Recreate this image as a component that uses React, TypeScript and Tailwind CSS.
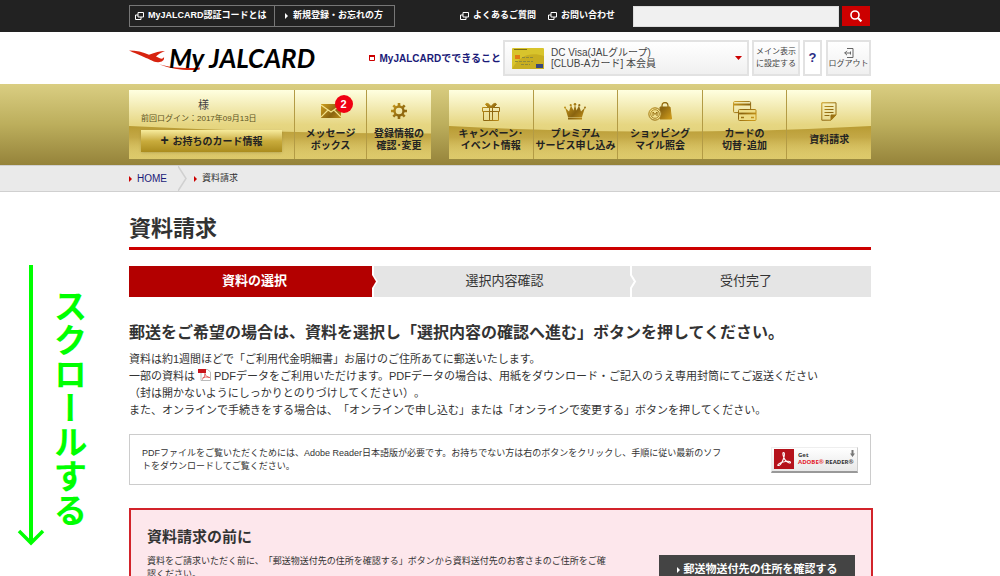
import React from 'react';

const Win = () => (
  <svg viewBox="0 0 9 8" className="w-[9px] h-2 shrink-0" fill="none" stroke="currentColor">
    <path d="M3 .5h5.500v4.500H3z M3 3H.5v4.500h5.500V5" />
  </svg>
);

const Tri = ({ className = '' }: { className?: string }) => (
  <svg viewBox="0 0 3 6" className={`w-[3px] h-[6px] shrink-0 ${className}`} fill="currentColor">
    <path d="M0 0l3 3-3 3z" />
  </svg>
);

const GoldDefs = () => (
  <svg className="absolute size-0" aria-hidden="true">
    <defs>
      <linearGradient id="gold" gradientUnits="userSpaceOnUse" x1="0" y1="0" x2="20" y2="18">
        <stop offset="0" stopColor="#cf9f1c" />
        <stop offset=".55" stopColor="#8a6410" />
        <stop offset="1" stopColor="#c8961a" />
      </linearGradient>
      <linearGradient id="shade" x1="0" y1="0" x2="0" y2="1">
        <stop offset="0" stopColor="#a98718" stopOpacity=".75" />
        <stop offset=".35" stopColor="#b3922a" stopOpacity=".65" />
        <stop offset="1" stopColor="#d9c25c" stopOpacity=".1" />
      </linearGradient>
    </defs>
  </svg>
);

const MailIcon = () => (
  <svg viewBox="0 0 20 14" className="w-5 h-[14px]">
    <path d="M0 0h20v14H0z" fill="url(#gold)" />
    <path d="M0 1l10 7 10-7M0 13l7-7M20 13l-7-7" stroke="#f3e28a" strokeWidth="1.200" fill="none" />
  </svg>
);

const GearIcon = () => (
  <svg viewBox="0 0 16 16" className="size-4" fill="none" stroke="url(#gold)">
    <circle cx="8" cy="8" r="4.500" strokeWidth="2.400" />
    <path d="M8 0v3M8 13v3M0 8h3M13 8h3M2.300 2.300l2 2M11.700 11.700l2 2M2.300 13.700l2-2M11.700 4.300l2-2" strokeWidth="2.600" />
  </svg>
);

const GiftIcon = () => (
  <svg viewBox="0 0 18 19" className="w-[18px] h-[19px]" fill="none" stroke="url(#gold)">
    <path d="M.5 5.500h17v4H.5zM1.500 9.500h15v9h-15z" />
    <path d="M7.500 5v13.500M10.500 5v13.500" />
    <path d="M9 5C7 1 4 .5 3.500 2.500L6 5zM9 5c2-4 5-4.500 5.500-2.500L12 5z" fill="url(#gold)" />
  </svg>
);

const CrownIcon = () => (
  <svg viewBox="0 0 22 17" className="w-[22px] h-[17px]" fill="url(#gold)">
    <path d="M1 4.500l4 4 2-6 2.500 5L11 1.500l1.500 6 2.500-5 2 6 4-4-3 9.500H4z" />
    <circle cx="1" cy="4.500" r="1" />
    <circle cx="6.700" cy="2.200" r="1.100" />
    <circle cx="11" cy="1.300" r="1.300" />
    <circle cx="15.300" cy="2.200" r="1.100" />
    <circle cx="21" cy="4.500" r="1" />
    <path d="M4 14.500h14v2H4z" />
  </svg>
);

const BagIcon = () => (
  <svg viewBox="0 0 24 19" className="w-6 h-[19px]" fill="none" stroke="url(#gold)">
    <path d="M12 5h10l1.500 12H12z" fill="url(#gold)" />
    <path d="M14 7V3.500a3 3 0 016 0V7" strokeWidth="1.300" />
    <circle cx="7" cy="12" r="6.200" fill="#f0df8c" />
    <circle cx="7" cy="12" r="4.300" strokeWidth=".8" />
    <path d="M5 14v-4l2 2.500L9 10v4" />
  </svg>
);

const CardsIcon = () => (
  <svg viewBox="0 0 24 20" className="w-6 h-5" fill="none" stroke="url(#gold)">
    <rect x=".6" y=".6" width="17" height="11" rx="1" />
    <path d="M1 3.500h16.500" strokeWidth="2" />
    <rect x="5.500" y="8.500" width="17.500" height="11" rx="1" fill="#eddb84" />
    <path d="M6 12.500h17" strokeWidth="1.800" />
    <path d="M18 16.500h3M8 16.500h3" strokeWidth="1.400" />
  </svg>
);

const DocIcon = () => (
  <svg viewBox="0 0 16 19" className="w-4 h-[19px]" fill="none" stroke="url(#gold)">
    <path d="M.8.8h14.200V13l-5 5.200H.8z" />
    <path d="M3.500 4.500h9M3.500 7.500h9M3.500 10.500h9M3.500 13.500h5" />
    <path d="M10 18v-5h5z" fill="url(#gold)" />
  </svg>
);

const leftNav = [
  { icon: MailIcon, lines: ['メッセージ', 'ボックス'], badge: 2, width: 'w-[71px]' },
  { icon: GearIcon, lines: ['登録情報の', '確認･変更'], badge: 0, width: 'w-[65px]' },
];

const rightNav = [
  { icon: GiftIcon, lines: ['キャンペーン･', 'イベント情報'] },
  { icon: CrownIcon, lines: ['プレミアム', 'サービス申し込み'] },
  { icon: BagIcon, lines: ['ショッピング', 'マイル照会'] },
  { icon: CardsIcon, lines: ['カードの', '切替･追加'] },
  { icon: DocIcon, lines: ['資料請求'] },
];

const panel = 'relative flex h-[69px] bg-linear-to-b from-[#ffffe0] via-[#e6d682] to-[#ddca6c]';
const cell = 'relative flex flex-col items-center border-l border-[#b39b45] first-of-type:border-l-0';
const label = 'mt-[7px] flex h-6 flex-col justify-center whitespace-nowrap text-center text-[10px] leading-3 font-bold text-[#222]';
const headBtn = 'border-2 border-[#e2e2e2] bg-linear-to-b from-white to-[#f0f0f0] text-[8px] text-[#444]';

const TopBar = () => (
  <div className="bg-[#222] text-white">
    <div className="mx-auto flex h-8 max-w-[742px] items-center text-[9px] font-bold">
      <div className="flex h-[22px] border border-[#777]">
        <a href="#" className="flex w-[145px] items-center gap-1 border-r border-[#777] pl-[5px]"><Win />MyJALCARD認証コードとは</a>
        <a href="#" className="flex w-[119px] items-center gap-[5px] pl-[10px]"><Tri />新規登録・お忘れの方</a>
      </div>
      <div className="ml-auto flex gap-3">
        <a href="#" className="flex items-center gap-1"><Win />よくあるご質問</a>
        <a href="#" className="flex items-center gap-1"><Win />お問い合わせ</a>
      </div>
      <form className="ml-[18px] flex items-center gap-[3px] pr-px" onSubmit={(e) => e.preventDefault()}>
        <input type="search" aria-label="サイト内検索" className="h-[21px] w-[206px] border border-[#ddd] bg-[#f0f0f0] px-1 text-[10px] text-[#222]" />
        <button type="submit" aria-label="検索" className="flex h-5 w-7 items-center justify-center bg-[#cc0000]">
          <svg viewBox="0 0 12 12" className="size-3" fill="none" stroke="#fff" strokeWidth="1.600">
            <circle cx="5" cy="5" r="4" />
            <path d="M7.800 7.800l3.600 3.600" strokeWidth="2.200" />
          </svg>
        </button>
      </form>
    </div>
  </div>
);

const Header = () => (
  <header className="mx-auto flex h-[52px] max-w-[742px] items-center">
    <a href="#" className="flex items-center whitespace-nowrap font-['Lato',sans-serif] text-[26px] leading-6 font-bold text-black italic">
      <svg viewBox="0 0 72 24" className="-mr-8 h-6 w-[72px] shrink-0" fill="#d7230f">
        <path d="M0 4.500c7 0 14 1.500 20 4.300C26 6.500 31 5 36 5c-4 1.500-7 3.500-9 5.500 3 1.500 5 2.500 6.500 2 .8-.3 1.300-1 1.500-1.500.5 2-.8 4.800-4.500 5C25 17 22 13.500 17 12 12 9.500 4 6.500 0 4.500z" />
        <path d="M30 18c10 3.500 27 5 41 3.500l-.5 2.300C54 25 40 22.500 30 18z" />
      </svg>
      My JALCARD
    </a>
    <div className="ml-auto flex h-[36px] shrink-0">
      <a href="#" className="mr-[2px] flex items-center gap-[5px] text-[10px] font-bold text-[#1a1a78]">
        <svg viewBox="0 0 6 6" className="size-[6px]"><path d="M.5.5h5v5h-5z" fill="#fff" stroke="#cc0000" /><path d="M0 0h6v2H0z" fill="#cc0000" /></svg>
        MyJALCARDでできること
      </a>
      <label className={`relative flex w-[246px] items-center ${headBtn}`}>
        <svg viewBox="0 0 32 21" className="ml-[7px] h-[21px] w-8" aria-hidden="true">
          <rect width="32" height="21" rx="1" fill="#d8c42c" />
          <path d="M0 21C8 6 20 4 32 8v13z" fill="#c8ae20" />
          <path d="M2 1.500h13" stroke="#766713" strokeWidth=".9" />
          <rect x="3" y="7" width="5" height="4" fill="#e07a14" />
          <path d="M10 9.500h12M3 13.500h18M9 16.500h9" stroke="#8f8a3a" strokeDasharray="3 1" />
          <rect x="24" y="16" width="7" height="4" fill="#38467a" />
        </svg>
        <span className="ml-[7px] text-[10px] leading-[11px]">DC Visa(JALグループ)<br />[CLUB-Aカード] 本会員</span>
        <svg viewBox="0 0 7 4" className="mr-[5px] ml-auto h-1 w-[7px]"><path d="M0 0h7L3.500 4z" fill="#cc0000" /></svg>
        <select aria-label="カード選択" className="absolute inset-0 w-full cursor-pointer opacity-0">
          <option>DC Visa(JALグループ) [CLUB-Aカード] 本会員</option>
        </select>
      </label>
      <button className={`ml-[3px] w-12 leading-3 ${headBtn}`}>メイン表示<br />に設定する</button>
      <button className="ml-[3px] w-[19px] border-2 border-[#e2e2e2] text-[13px] font-bold text-[#2c2c86]">?</button>
      <button className={`ml-1 flex w-[45px] flex-col items-center justify-center leading-[10px] ${headBtn}`}>
        <svg viewBox="0 0 10 10" className="mb-px size-[10px]" fill="none" stroke="#666"><path d="M3 .5h6v9H3M.5 5h6M3 2.800L.8 5 3 7.200M6.500 3.500v3" /></svg>
        <span className="whitespace-nowrap">ログアウト</span>
      </button>
    </div>
  </header>
);

const GoldNav = () => (
  <nav className="bg-linear-to-b from-[#dace82] via-[#bcae5c] to-[#95833a]">
    <GoldDefs />
    <div className="mx-auto flex h-[81px] max-w-[742px] justify-between pt-[6px]">
      <div className={panel}>
        <svg viewBox="0 0 302 40" preserveAspectRatio="none" className="absolute bottom-0 h-[33px] w-full"><path d="M0 0Q150 9 302 9V40H0z" fill="url(#shade)" /></svg>
        <div className="relative flex w-[166px] flex-col border-r border-[#b39b45] pr-3 pl-3">
          <p className="mt-2 pr-4 text-center text-[11px] leading-[14px] text-[#444]">様</p>
          <p className="text-[8px] leading-[14px] text-[#5c5222]">前回ログイン：2017年09月13日</p>
          <button className="mt-1 h-[22px] w-[141px] bg-linear-to-b from-[#f7ec9c] from-0% via-[#c9ac3c] via-50% to-[#ab8c1d] text-[10px] font-bold text-[#222] shadow-sm"><span className="mr-1 text-sm leading-none">+</span>お持ちのカード情報</button>
        </div>
        {leftNav.map((item) => (
          <a href="#" key={item.lines[0]} className={`${cell} ${item.width}`}>
            <span className="relative mt-[11px] flex h-5 items-center">
              <item.icon />
              {item.badge > 0 && (
                <span className="absolute -top-[6px] left-[14px] flex size-[18px] items-center justify-center rounded-full bg-[#f00012] text-[11px] font-bold text-white">{item.badge}</span>
              )}
            </span>
            <span className={label}>{item.lines.map((l) => <span key={l}>{l}</span>)}</span>
          </a>
        ))}
      </div>
      <div className={`w-[422px] ${panel}`}>
        <svg viewBox="0 0 422 40" preserveAspectRatio="none" className="absolute bottom-0 h-[33px] w-full"><path d="M0 0Q211 14 422 0V40H0z" fill="url(#shade)" /></svg>
        {rightNav.map((item) => (
          <a href="#" key={item.lines[0]} className={`flex-1 ${cell}`}>
            <span className="mt-[11px] flex h-5 items-center"><item.icon /></span>
            <span className={label}>{item.lines.map((l) => <span key={l}>{l}</span>)}</span>
          </a>
        ))}
      </div>
    </div>
  </nav>
);

const Breadcrumb = () => (
  <div className="border-y border-[#d0d0d0] bg-[#eaeaea]">
    <div className="mx-auto flex h-[25px] max-w-[742px] items-center text-[#333]">
      <a href="#" className="flex items-center gap-[5px] text-[10px] text-[#1a1a78]"><Tri className="text-[#cc0000]" />HOME</a>
      <svg viewBox="0 0 9 25" className="mr-[7px] ml-[11px] h-[25px] w-[9px]" fill="none" stroke="#d0d0d0" strokeWidth="1.500"><path d="M0 0l8 12.500L0 25" /></svg>
      <span className="flex items-center gap-[5px] text-[9px]"><Tri className="text-[#cc0000]" />資料請求</span>
    </div>
  </div>
);

const Steps = () => (
  <ol className="mt-4 flex h-[31px] bg-[#e5e5e5] text-center text-[13px] leading-[30px] text-[#333]">
    <li className="relative w-[243px] bg-[#b30000] pl-2 font-bold text-white">
      資料の選択
      <svg viewBox="0 0 8 31" className="absolute top-0 left-full h-[31px] w-2"><path d="M0 0h2v9.500l4 6-4 6V31H0z" fill="#fff" /><path d="M0 9l4 6.500L0 22z" fill="#b30000" /></svg>
    </li>
    <li className="relative w-[258px] pl-[7px]">
      選択内容確認
      <svg viewBox="0 0 8 31" className="absolute top-0 left-full h-[31px] w-2" fill="none" stroke="#fff" strokeWidth="2"><path d="M1 0v9l4 6.500L1 22v9" /></svg>
    </li>
    <li className="flex-1 pr-[9px]">受付完了</li>
  </ol>
);

const PdfMark = () => (
  <svg viewBox="0 0 13 12" className="mr-[3px] ml-[3px] inline h-3 w-[13px] align-[-1px]">
    <path d="M3 .5h6.500L12.500 3v8.500H3z" fill="#fff" stroke="#bbb" />
    <path d="M0 0h8v4H0z" fill="#c8141b" />
    <path d="M7 4c0 3-1 5-3 6.500M7 5c1 2 2.500 3.500 5 3.500M4.500 9c2-1 4-1.500 7-.5" fill="none" stroke="#e05050" strokeWidth=".9" />
  </svg>
);

const ReaderBadge = () => (
  <a href="#" className="flex h-[26px] w-[87px] shrink-0 items-center border border-t-[#eee] border-r-[#ccc] border-b-2 border-b-[#999] border-l-[#eee] bg-linear-to-b from-white to-[#e8e8e8] pl-[2px]">
    <svg viewBox="0 0 20 20" className="size-5 shrink-0">
      <path d="M0 0h20v20H0z" fill="#b5121b" />
      <path d="M9.500 3.500c1.500 0 1 4-.5 7.500-1.500 3.300-3.500 6-5 5.500-1-.8 2-3 6-3.800 3.500-.8 6.500-.5 6.500.7s-3 .5-5-2c-2-2.300-3.500-7.900-2-7.900z" fill="none" stroke="#fff" strokeWidth="1.100" />
    </svg>
    <span className="ml-1 whitespace-nowrap font-['Open_Sans',sans-serif] text-[6px] leading-[7px] font-bold text-[#333]">
      Get<br /><span className="text-[#e3202a]">ADOBE®</span> READER®
    </span>
    <svg viewBox="0 0 5 7" className="-ml-1 mb-3 h-[7px] w-[5px] shrink-0" fill="#777"><path d="M1.500 0h2v3.500H5L2.500 7 0 3.500h1.500z" /></svg>
  </a>
);

const ScrollNote = () => (
  <div className="absolute top-[265px] left-[17px] flex gap-[6px] text-[#00ff00]">
    <svg viewBox="0 0 28 281" className="h-[281px] w-7" fill="none" stroke="currentColor" strokeWidth="4">
      <path d="M14 0v278" />
      <path d="M2 266l12 12 12-12" strokeWidth="3.500" />
    </svg>
    <span className="pt-6 text-[34px] leading-[34px] font-bold [writing-mode:vertical-rl]">スクロールする</span>
  </div>
);

export default function App() {
  return (
    <div lang="ja" className="relative h-screen overflow-hidden bg-white font-['Liberation_Sans','Noto_Sans_CJK_JP',sans-serif] text-[#333] [text-spacing-trim:space-all]">
      <TopBar />
      <Header />
      <GoldNav />
      <Breadcrumb />
      <main className="mx-auto max-w-[742px]">
        <h1 className="mt-[21px] border-b-3 border-[#cc0000] pb-[2px] text-[22px] leading-8 font-bold">資料請求</h1>
        <Steps />
        <h2 className="mt-[25px] text-base leading-[22px] font-bold whitespace-nowrap">郵送をご希望の場合は、資料を選択し「選択内容の確認へ進む」ボタンを押してください。</h2>
        <p className="mt-[7px] text-[11px] leading-[17px]">
          資料は約1週間ほどで「ご利用代金明細書」お届けのご住所あてに郵送いたします。<br />
          一部の資料は<PdfMark />PDFデータをご利用いただけます。PDFデータの場合は、用紙をダウンロード・ご記入のうえ専用封筒にてご返送ください<br />
          （封は開かないようにしっかりとのりづけしてください）。<br />
          また、オンラインで手続きをする場合は、「オンラインで申し込む」または「オンラインで変更する」ボタンを押してください。
        </p>
        <div className="mt-[15px] flex h-[51px] items-center justify-between border border-[#ccc] px-3">
          <p className="text-[9px] leading-[13px]">
            PDFファイルをご覧いただくためには、Adobe Reader日本語版が必要です。お持ちでない方は右のボタンをクリックし、手順に従い最新のソフ<br />
            トをダウンロードしてご覧ください。
          </p>
          <ReaderBadge />
        </div>
        <section className="-mr-[2px] mt-[23px] border-2 border-[#d2232a] bg-[#fde7ec] px-4 pt-[17px] pb-6">
          <h3 className="text-[15px] leading-5 font-bold">資料請求の前に</h3>
          <div className="mt-2 flex items-start justify-between">
            <p className="text-[9px] leading-[13px]">
              資料をご請求いただく前に、「郵送物送付先の住所を確認する」ボタンから資料送付先のお客さまのご住所をご確<br />
              認ください。
            </p>
            <button className="flex h-[29px] w-[196px] items-center justify-center gap-1 bg-[#444] text-[11px] font-bold text-white"><Tri />郵送物送付先の住所を確認する</button>
          </div>
        </section>
      </main>
      <ScrollNote />
    </div>
  );
}
